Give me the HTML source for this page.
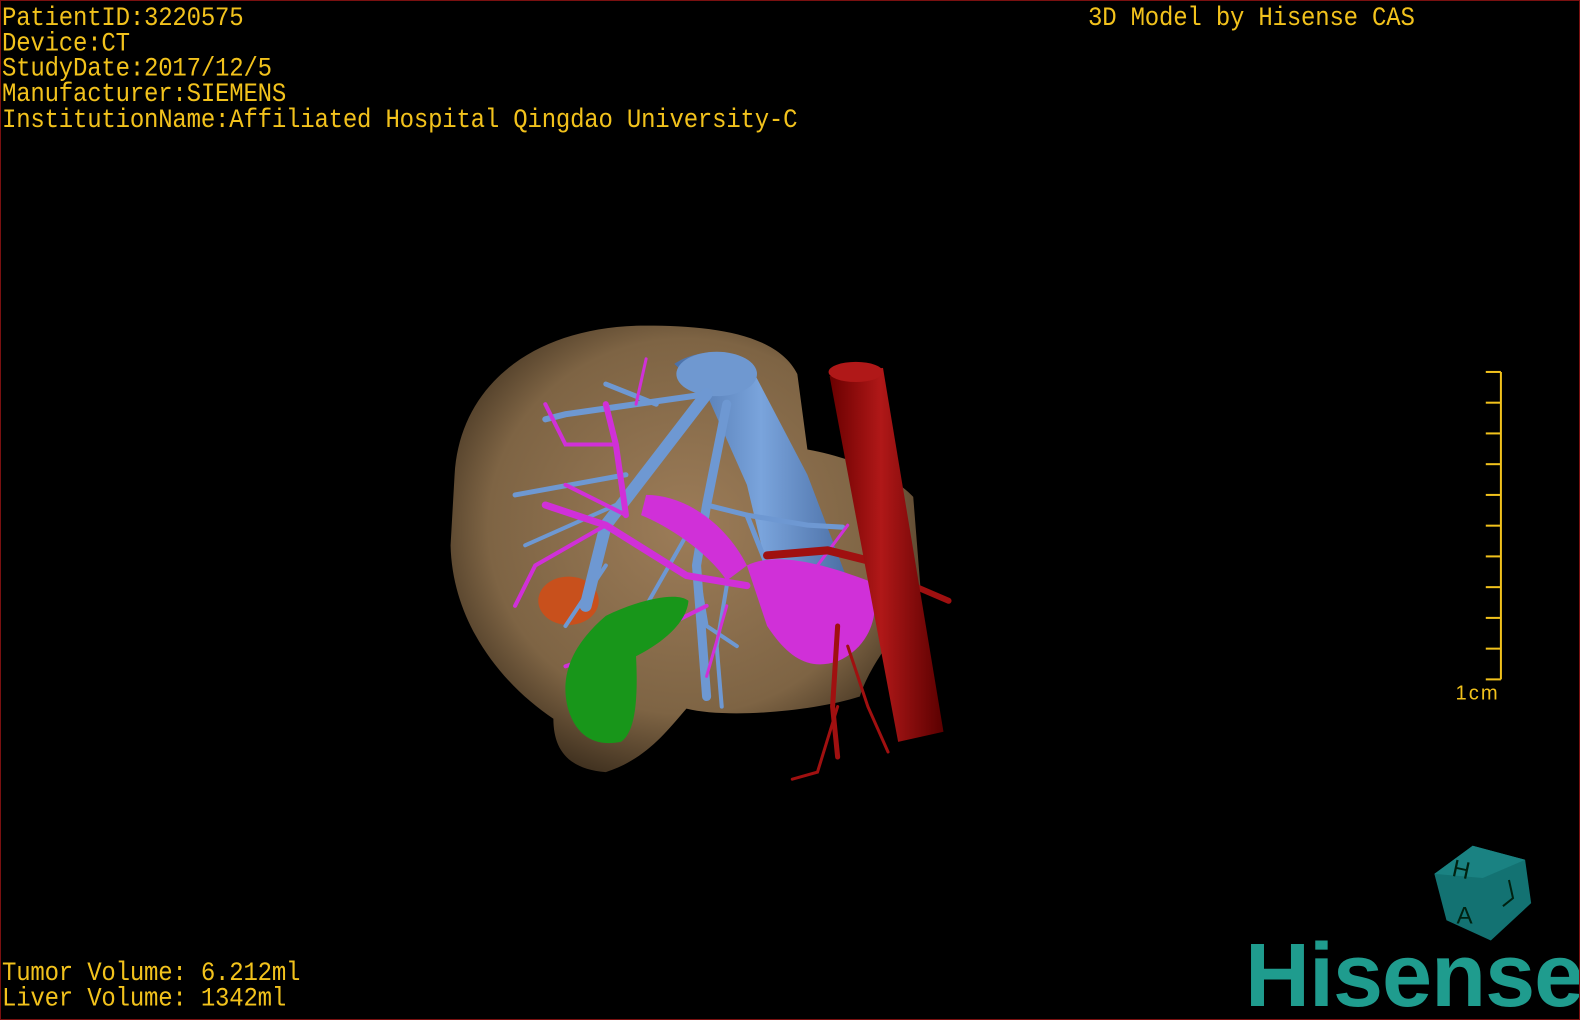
<!DOCTYPE html>
<html><head><meta charset="utf-8"><style>
html,body{margin:0;padding:0;background:#000;}
#f{position:relative;width:1580px;height:1020px;background:#000;overflow:hidden;box-sizing:border-box;border:1px solid #7a1010;}
.t{position:absolute;color:#f2c21c;font-family:"Liberation Mono",monospace;font-size:24px;line-height:22.7px;white-space:pre;transform:scaleY(1.12);transform-origin:0 0;letter-spacing:-0.2px;}
#logo{position:absolute;left:1244px;top:930px;font-family:"Liberation Sans",sans-serif;font-weight:bold;font-size:90px;line-height:90px;color:#1f9c8e;letter-spacing:-1px;}
</style></head><body><div id="f">
<div class="t" style="left:1px;top:6px">PatientID:3220575
Device:CT
StudyDate:2017/12/5
Manufacturer:SIEMENS
InstitutionName:Affiliated Hospital Qingdao University-C</div>
<div class="t" style="left:1087px;top:6px">3D Model by Hisense CAS</div>
<div class="t" style="left:1px;top:961px">Tumor Volume: 6.212ml
Liver Volume: 1342ml</div>

<svg width="1580" height="1020" style="position:absolute;left:0;top:0">
<defs>
<radialGradient id="lv" cx="0.5" cy="0.45" r="0.6"><stop offset="0" stop-color="#9c7c58"/><stop offset="0.7" stop-color="#7e6444"/><stop offset="1" stop-color="#3a2c1c"/></radialGradient>
<linearGradient id="ao" x1="0" x2="1"><stop offset="0" stop-color="#6a0000"/><stop offset="0.45" stop-color="#b01818"/><stop offset="1" stop-color="#5a0000"/></linearGradient>
<linearGradient id="iv" x1="0" x2="1"><stop offset="0" stop-color="#4a70a8"/><stop offset="0.5" stop-color="#7aa4dc"/><stop offset="1" stop-color="#4a6ea4"/></linearGradient>
</defs>
<g transform="scale(1.008)">
<path d="M450 470 C455 380 530 322 640 322 C705 322 770 330 790 370 L800 445 C840 452 885 470 905 492 L912 580 C895 625 865 650 852 690 C805 705 720 712 680 702 C660 725 640 752 600 765 C562 762 548 742 548 712 C500 680 448 620 446 540 Z" fill="url(#lv)"/>
<ellipse cx="563" cy="595" rx="30" ry="24" fill="#c8501c"/>
<path d="M668 360 C690 345 735 342 745 365 L800 470 L840 575 L800 590 L765 585 L740 480 L700 390 Z" fill="url(#iv)"/>
<ellipse cx="710" cy="370" rx="40" ry="22" fill="#6f98d0"/>
<g stroke="#6e98d2" stroke-linecap="round" fill="none">
<path d="M700 390 L600 520 L580 600" stroke-width="12"/>
<path d="M720 400 L700 500 L690 560 L700 690" stroke-width="9"/>
<path d="M700 390 L560 410 L540 415" stroke-width="6"/>
<path d="M650 400 L600 380" stroke-width="5"/>
<path d="M620 470 L510 490" stroke-width="5"/>
<path d="M610 500 L520 540" stroke-width="4"/>
<path d="M700 500 L740 510 L800 520 L835 522" stroke-width="5"/>
<path d="M740 510 L760 560 L780 600" stroke-width="5"/>
<path d="M690 560 L700 620 L730 640" stroke-width="4"/>
<path d="M600 560 L560 620" stroke-width="4"/>
<path d="M680 530 L640 600 L625 640" stroke-width="4"/>
<path d="M720 580 L710 640 L715 700" stroke-width="4"/>
</g>
<path d="M740 560 C770 545 820 560 860 575 C875 600 865 640 830 655 C800 665 780 650 760 620 Z" fill="#d030d8"/>
<path d="M640 490 C680 490 720 520 740 560 L720 575 C700 545 660 520 635 510 Z" fill="#d030d8"/>
<g stroke="#d030d8" stroke-linecap="round" fill="none">
<path d="M740 580 L680 570 L600 520 L540 500" stroke-width="7"/>
<path d="M620 510 L610 440 L600 400" stroke-width="6"/>
<path d="M610 440 L560 440 L540 400" stroke-width="4"/>
<path d="M600 520 L530 560 L510 600" stroke-width="4"/>
<path d="M620 510 L560 480" stroke-width="4"/>
<path d="M700 600 L620 640 L560 660" stroke-width="4"/>
<path d="M720 600 L700 670" stroke-width="3"/>
<path d="M630 400 L640 355" stroke-width="3"/>
<path d="M780 600 L840 520" stroke-width="3"/>
</g>
<g stroke="#a01010" stroke-linecap="round" fill="none">
<path d="M880 560 L820 545 L760 550" stroke-width="8"/>
<path d="M830 620 L825 700 L830 750" stroke-width="5"/>
<path d="M840 640 L860 700 L880 745" stroke-width="3"/>
<path d="M830 700 L810 765 L785 772" stroke-width="3"/>
<path d="M905 580 L940 595" stroke-width="6"/>
</g>
<path d="M822 372 L875 364 L935 725 L890 735 Z" fill="url(#ao)"/>
<ellipse cx="848" cy="368" rx="27" ry="10" fill="#b01818"/>
<path d="M600 610 C630 595 670 585 682 595 C680 620 650 640 630 650 C632 690 630 725 615 735 C590 740 570 730 562 700 C555 670 565 640 600 610 Z" fill="#18961a"/>
<g stroke="#f2c21c" stroke-width="2">
<line x1="1488" y1="368" x2="1488" y2="673"/>
<line x1="1473" y1="368" x2="1488" y2="368"/><line x1="1473" y1="398.5" x2="1488" y2="398.5"/><line x1="1473" y1="429" x2="1488" y2="429"/><line x1="1473" y1="459.5" x2="1488" y2="459.5"/><line x1="1473" y1="490" x2="1488" y2="490"/><line x1="1473" y1="520.5" x2="1488" y2="520.5"/><line x1="1473" y1="551" x2="1488" y2="551"/><line x1="1473" y1="581.5" x2="1488" y2="581.5"/><line x1="1473" y1="612" x2="1488" y2="612"/><line x1="1473" y1="642.5" x2="1488" y2="642.5"/><line x1="1473" y1="673" x2="1488" y2="673"/>
</g>
<text x="1443" y="693" fill="#f2c21c" font-family="Liberation Sans,sans-serif" font-size="20" letter-spacing="2">1cm</text>
<path d="M1422 866 L1460 838 L1512 852 L1518 895 L1478 932 L1434 912 Z" fill="#137272"/>
<path d="M1422 866 L1460 838 L1512 852 L1470 870 Z" fill="#1a8282"/>
<text x="1440" y="870" fill="#021" font-family="Liberation Sans,sans-serif" font-size="24" transform="rotate(12 1450 862)">H</text>
<text x="1444" y="915" fill="#021" font-family="Liberation Sans,sans-serif" font-size="24">A</text>
<path d="M1496 872 L1500 890 L1490 898" stroke="#021" stroke-width="2" fill="none"/>
</g>
</svg>
<div id="logo">Hisense</div>
</div></body></html>
